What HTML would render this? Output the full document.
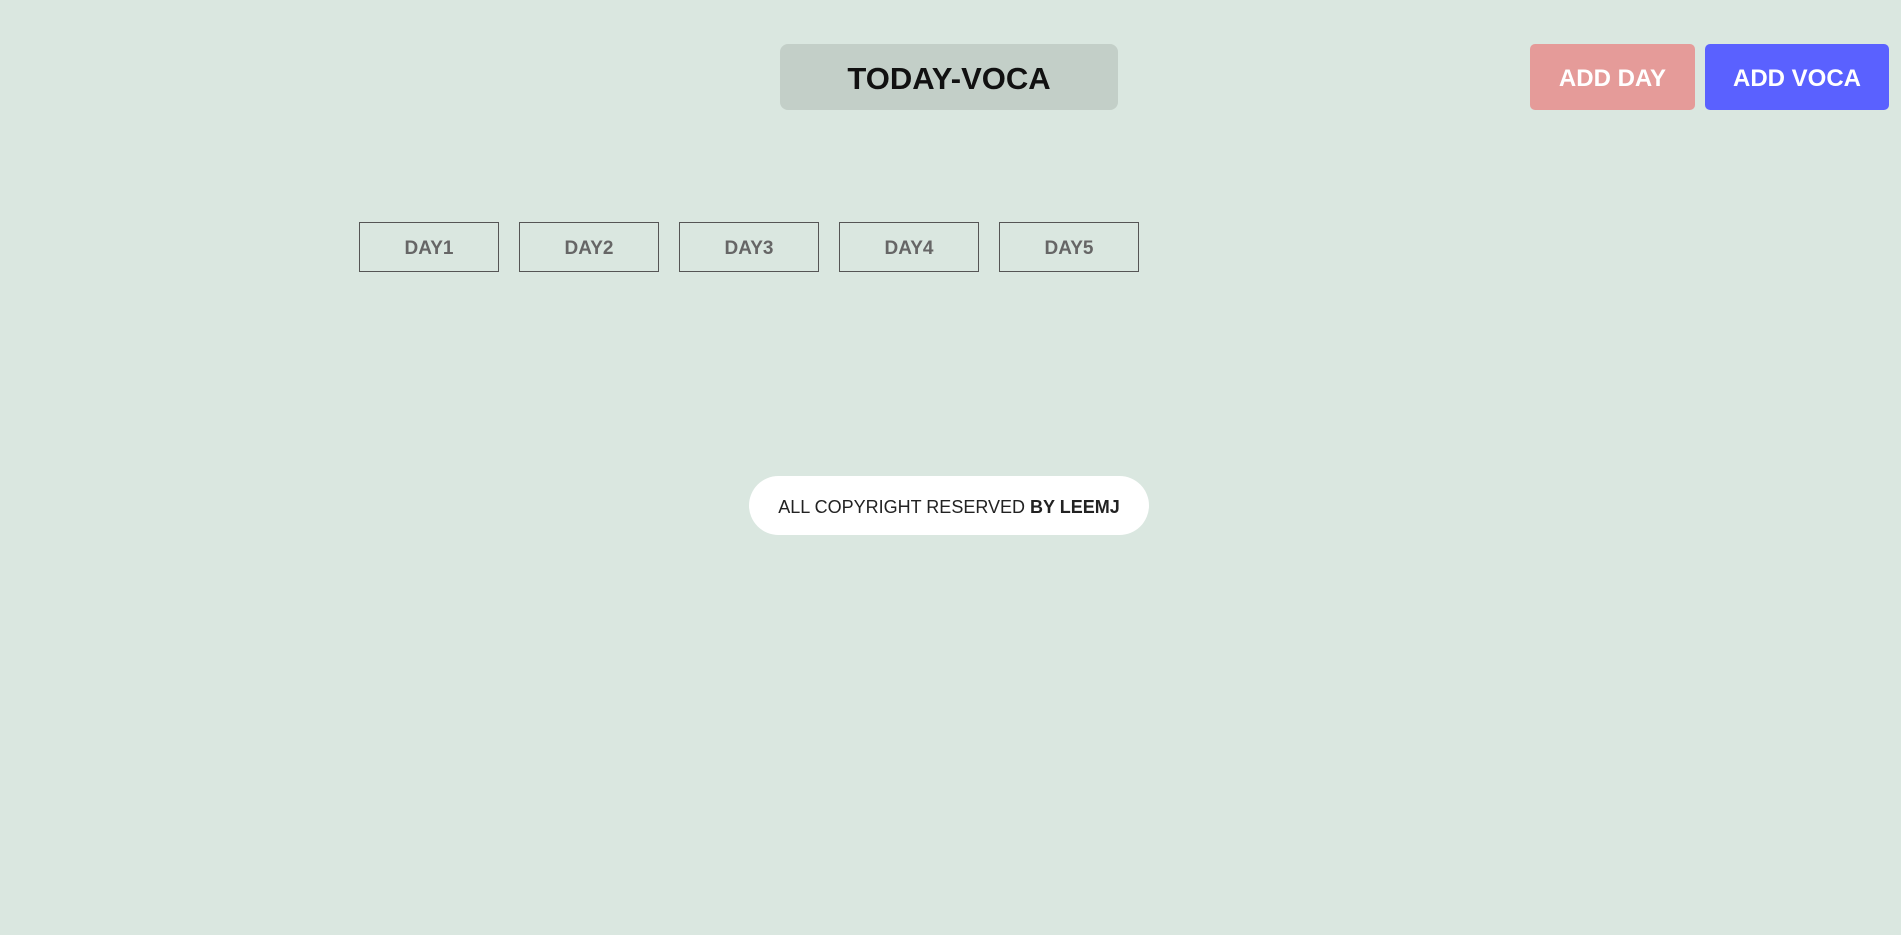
<!DOCTYPE html>
<html><head><meta charset="utf-8"><style>
body{margin:0;width:1901px;height:935px;background:#dae7e0;font-family:"Liberation Sans",sans-serif;position:relative;overflow:hidden}
.a{position:absolute;display:flex;align-items:center;justify-content:center;box-sizing:border-box;font-weight:bold;padding-top:3px}
.t{left:780px;top:44px;width:338px;height:66px;background:#c3cfc8;border-radius:8px;font-size:31px;color:#111}
.b{top:44px;height:66px;border-radius:5px;color:#fff;font-size:24px}
.d{top:222px;width:140px;height:50px;border:1.5px solid #555;color:#666;font-size:19px}
.f{left:749px;top:476px;width:400px;height:59px;background:#fff;border-radius:30px;font-weight:normal;font-size:18px;color:#222}
</style></head><body>
<div class="a t">TODAY-VOCA</div>
<div class="a b" style="left:1530px;width:165px;background:#e59b99">ADD DAY</div>
<div class="a b" style="left:1705px;width:184px;background:#5a61ff">ADD VOCA</div>
<div class="a d" style="left:359px">DAY1</div>
<div class="a d" style="left:519px">DAY2</div>
<div class="a d" style="left:679px">DAY3</div>
<div class="a d" style="left:839px">DAY4</div>
<div class="a d" style="left:999px">DAY5</div>
<div class="a f">ALL COPYRIGHT RESERVED&nbsp;<b>BY LEEMJ</b></div>
</body></html>
